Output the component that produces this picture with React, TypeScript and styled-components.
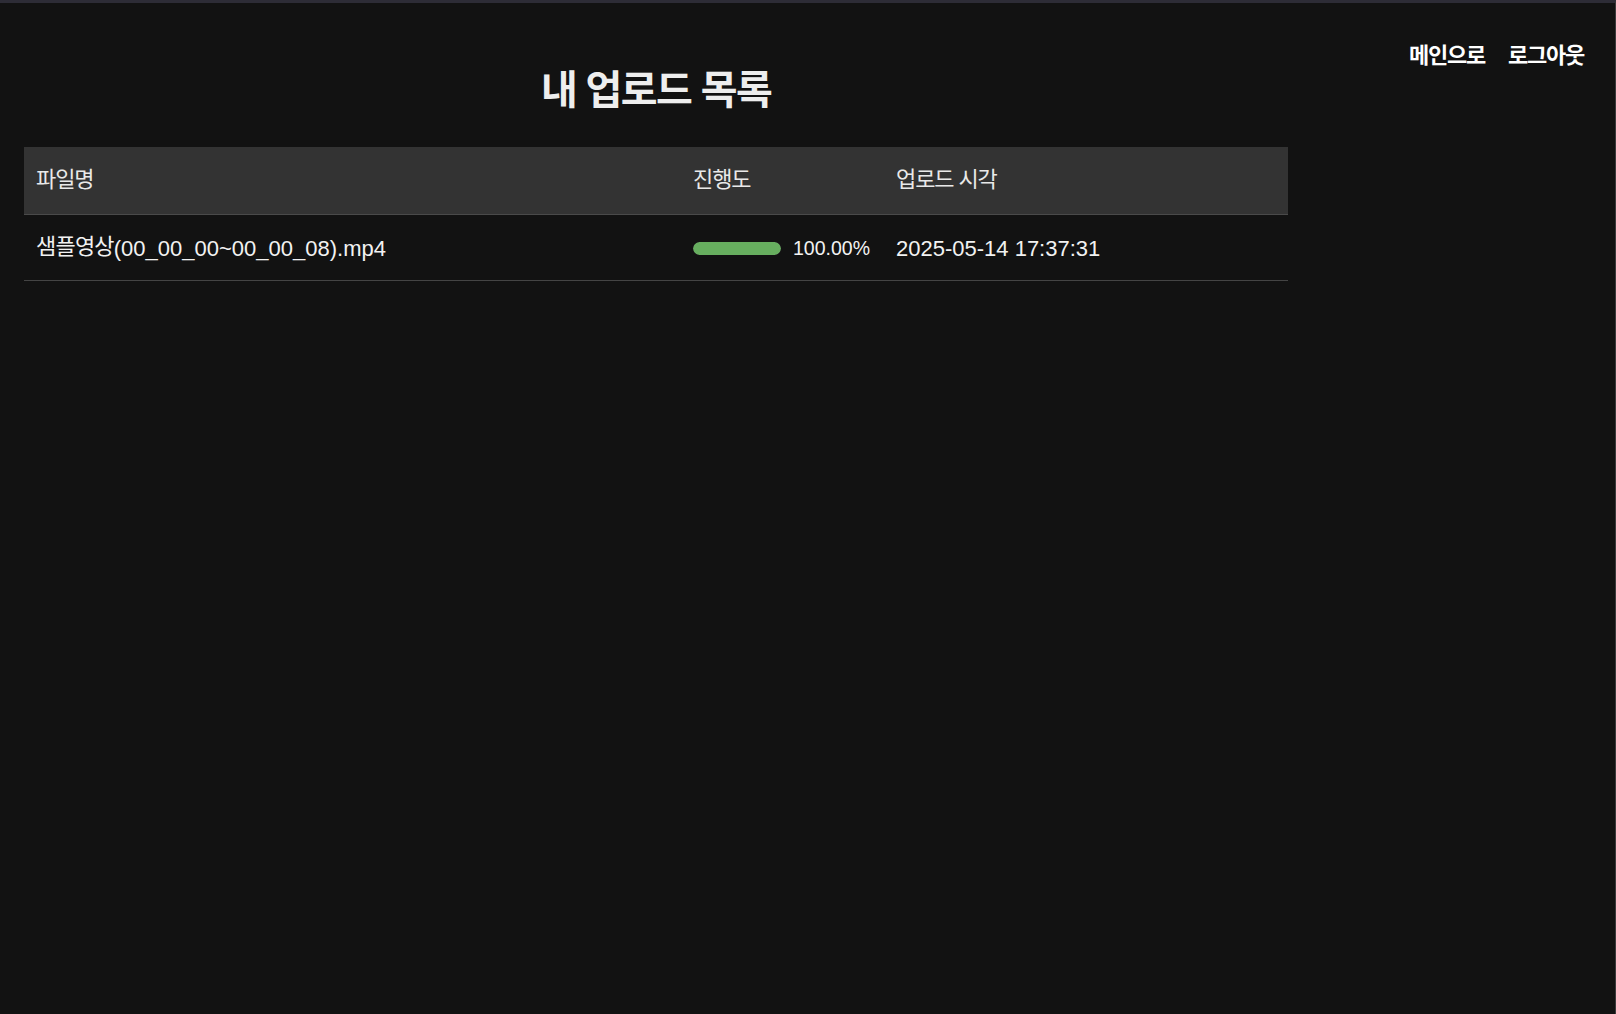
import React from "react";
import styled, { createGlobalStyle } from "styled-components";

const Global = createGlobalStyle`
  html, body {
    margin: 0;
    padding: 0;
    background: #121212;
  }
  body {
    font-family: "Liberation Sans", "Noto Sans CJK KR", sans-serif;
    color: #f2f2f2;
  }
`;

const Page = styled.div`
  height: 100vh;
  box-sizing: border-box;
  border-top: 3px solid #2d2c36;
  border-right: 1px solid #3c3c3c;
  display: grid;
  grid-template-columns: 1264px 1fr;
  align-items: start;
  padding-left: 24px;
  overflow: hidden;
`;

const Main = styled.main`
  padding-top: 62px;
  display: flex;
  flex-direction: column;
`;

const Title = styled.h1`
  margin: 0;
  text-align: center;
  font-size: 40px;
  line-height: 50px;
  font-weight: 700;
  color: #eeeeee;
  letter-spacing: -1.6px;
`;

const Ko = styled.span`
  display: inline-block;
  line-height: 20px;
  letter-spacing: -0.8px;
  transform: translateY(-2px);
`;

const Aside = styled.aside`
  display: flex;
  justify-content: flex-end;
  padding-top: 40px;
  padding-right: 31px;
`;

const Nav = styled.nav`
  display: flex;
  gap: 23px;
`;

const NavLink = styled.a`
  font-size: 22px;
  line-height: 26px;
  font-weight: 700;
  color: #ffffff;
  text-decoration: none;
  cursor: pointer;
  letter-spacing: -1.25px;
`;

const Table = styled.table`
  margin-top: 32px;
  width: 100%;
  border-collapse: collapse;
  table-layout: fixed;
`;

const HeadCell = styled.th<{ $w: number }>`
  box-sizing: border-box;
  width: ${(p) => p.$w}px;
  height: 67px;
  padding: 0 12px 6px;
  text-align: left;
  font-size: 22px;
  font-weight: 400;
  background: #333333;
  color: #e9e9e9;
  border-bottom: 1px solid #4a4a4a;
  letter-spacing: -1.1px;
`;

const Cell = styled.td`
  box-sizing: border-box;
  height: 66px;
  padding: 3px 12px 0;
  font-size: 22px;
  color: #f2f2f2;
  border-bottom: 1px solid #444444;
  white-space: nowrap;
`;

const Progress = styled.div`
  display: flex;
  align-items: center;
  gap: 12px;
`;

const Track = styled.div`
  width: 88px;
  height: 13px;
  border-radius: 7px;
  background: #3a3a3a;
  overflow: hidden;
`;

const Fill = styled.div`
  height: 100%;
  border-radius: 7px;
  background: #67ae5f;
`;

const Percent = styled.span`
  font-size: 19.5px;
`;

const uploads = [
  {
    nameKo: "샘플영상",
    nameRest: "(00_00_00~00_00_08).mp4",
    progress: 100,
    time: "2025-05-14 17:37:31",
  },
];

export default function App() {
  return (
    <>
      <Global />
      <Page>
        <Main>
          <Title>내 업로드 목록</Title>
          <Table>
            <thead>
              <tr>
                <HeadCell $w={657}>파일명</HeadCell>
                <HeadCell $w={203}>진행도</HeadCell>
                <HeadCell $w={404}>업로드 시각</HeadCell>
              </tr>
            </thead>
            <tbody>
              {uploads.map((u) => (
                <tr key={u.time}>
                  <Cell>
                    <Ko>{u.nameKo}</Ko>
                    {u.nameRest}
                  </Cell>
                  <Cell>
                    <Progress>
                      <Track>
                        <Fill style={{ width: `${u.progress}%` }} />
                      </Track>
                      <Percent>{u.progress.toFixed(2)}%</Percent>
                    </Progress>
                  </Cell>
                  <Cell>{u.time}</Cell>
                </tr>
              ))}
            </tbody>
          </Table>
        </Main>
        <Aside>
          <Nav>
            <NavLink>메인으로</NavLink>
            <NavLink>로그아웃</NavLink>
          </Nav>
        </Aside>
      </Page>
    </>
  );
}
